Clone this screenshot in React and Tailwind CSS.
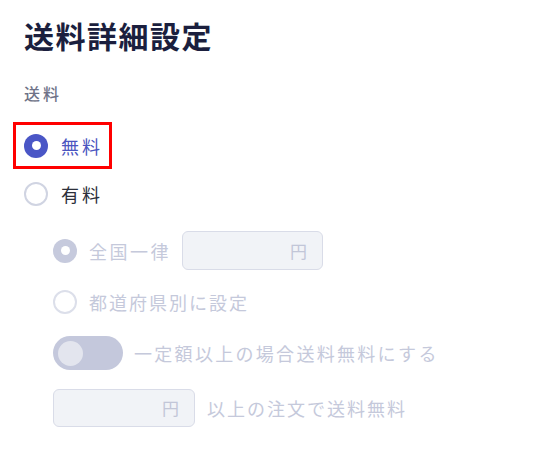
import { useState } from "react";

const font = { fontFamily: '"Noto Sans CJK JP", "Noto Sans", sans-serif' };

const Radio = ({ checked, disabled }) => {
  if (checked) {
    return (
      <span
        className={`flex h-[24px] w-[24px] shrink-0 items-center justify-center rounded-full ${
          disabled ? "bg-[#c6cadd]" : "bg-[#4a56c6]"
        }`}
      >
        <span className="h-[9px] w-[9px] rounded-full bg-white" />
      </span>
    );
  }
  return (
    <span
      className={`h-[24px] w-[24px] shrink-0 rounded-full border-2 bg-white ${
        disabled ? "border-[#dcdfea]" : "border-[#d0d4e2]"
      }`}
    />
  );
};

const YenInput = ({ className }) => (
  <div
    className={`flex items-center justify-end rounded-[6px] border border-[#d9dce8] bg-[#f1f3f7] pr-[15px] text-[17px] text-[#c2c6d8] ${className}`}
  >
    円
  </div>
);

const App = () => {
  const [fee] = useState("free");

  return (
    <div className="min-h-[471px] w-[535px] bg-white pl-[24px] pt-[17px]" style={font}>
      {/* Title */}
      <h1 className="h-[36px] text-[30px] font-bold leading-[36px] tracking-[1.5px] text-[#1b1f3e]">
        送料詳細設定
      </h1>

      {/* Label */}
      <div className="mt-[30px] text-[16px] font-medium leading-[20px] tracking-[3px] text-[#6e7287]">
        送料
      </div>

      {/* 無料 (selected) */}
      <div className="ml-[-11px] mt-[19px] flex h-[47px] w-[99px] items-center gap-[13px] border-[3px] border-[#ff0000] pl-[8px]">
        <Radio checked={fee === "free"} />
        <span className="text-[18px] leading-[24px] tracking-[3px] text-[#4b55c0]">無料</span>
      </div>

      {/* 有料 */}
      <div className="mt-[13px] flex h-[24px] items-center gap-[13px]">
        <Radio checked={fee === "paid"} />
        <span className="text-[18px] leading-[24px] tracking-[3px] text-[#2c2f3a]">有料</span>
      </div>

      {/* sub options (disabled) */}
      <div className="ml-[29px] text-[18px] leading-[24px] text-[#c5c9db]">
        <div className="mt-[25px] flex h-[39px] items-center">
          <Radio checked disabled />
          <span className="ml-[12px] tracking-[2.5px]">全国一律</span>
          <YenInput className="ml-[11px] h-[39px] w-[141px]" />
        </div>

        <div className="mt-[20px] flex h-[24px] items-center">
          <Radio disabled />
          <span className="ml-[12px] tracking-[2px]">都道府県別に設定</span>
        </div>

        <div className="mt-[22px] flex h-[34px] items-center">
          <span className="flex h-[34px] w-[70px] shrink-0 items-center rounded-full bg-[#c4c8dc] pl-[5px]">
            <span className="h-[25px] w-[25px] rounded-full bg-[#e3e5ee]" />
          </span>
          <span className="ml-[11px] tracking-[2.3px]">一定額以上の場合送料無料にする</span>
        </div>

        <div className="mt-[19px] flex h-[38px] items-center">
          <YenInput className="h-[38px] w-[142px]" />
          <span className="ml-[12px] tracking-[2px]">以上の注文で送料無料</span>
        </div>
      </div>
    </div>
  );
};

export default App;
